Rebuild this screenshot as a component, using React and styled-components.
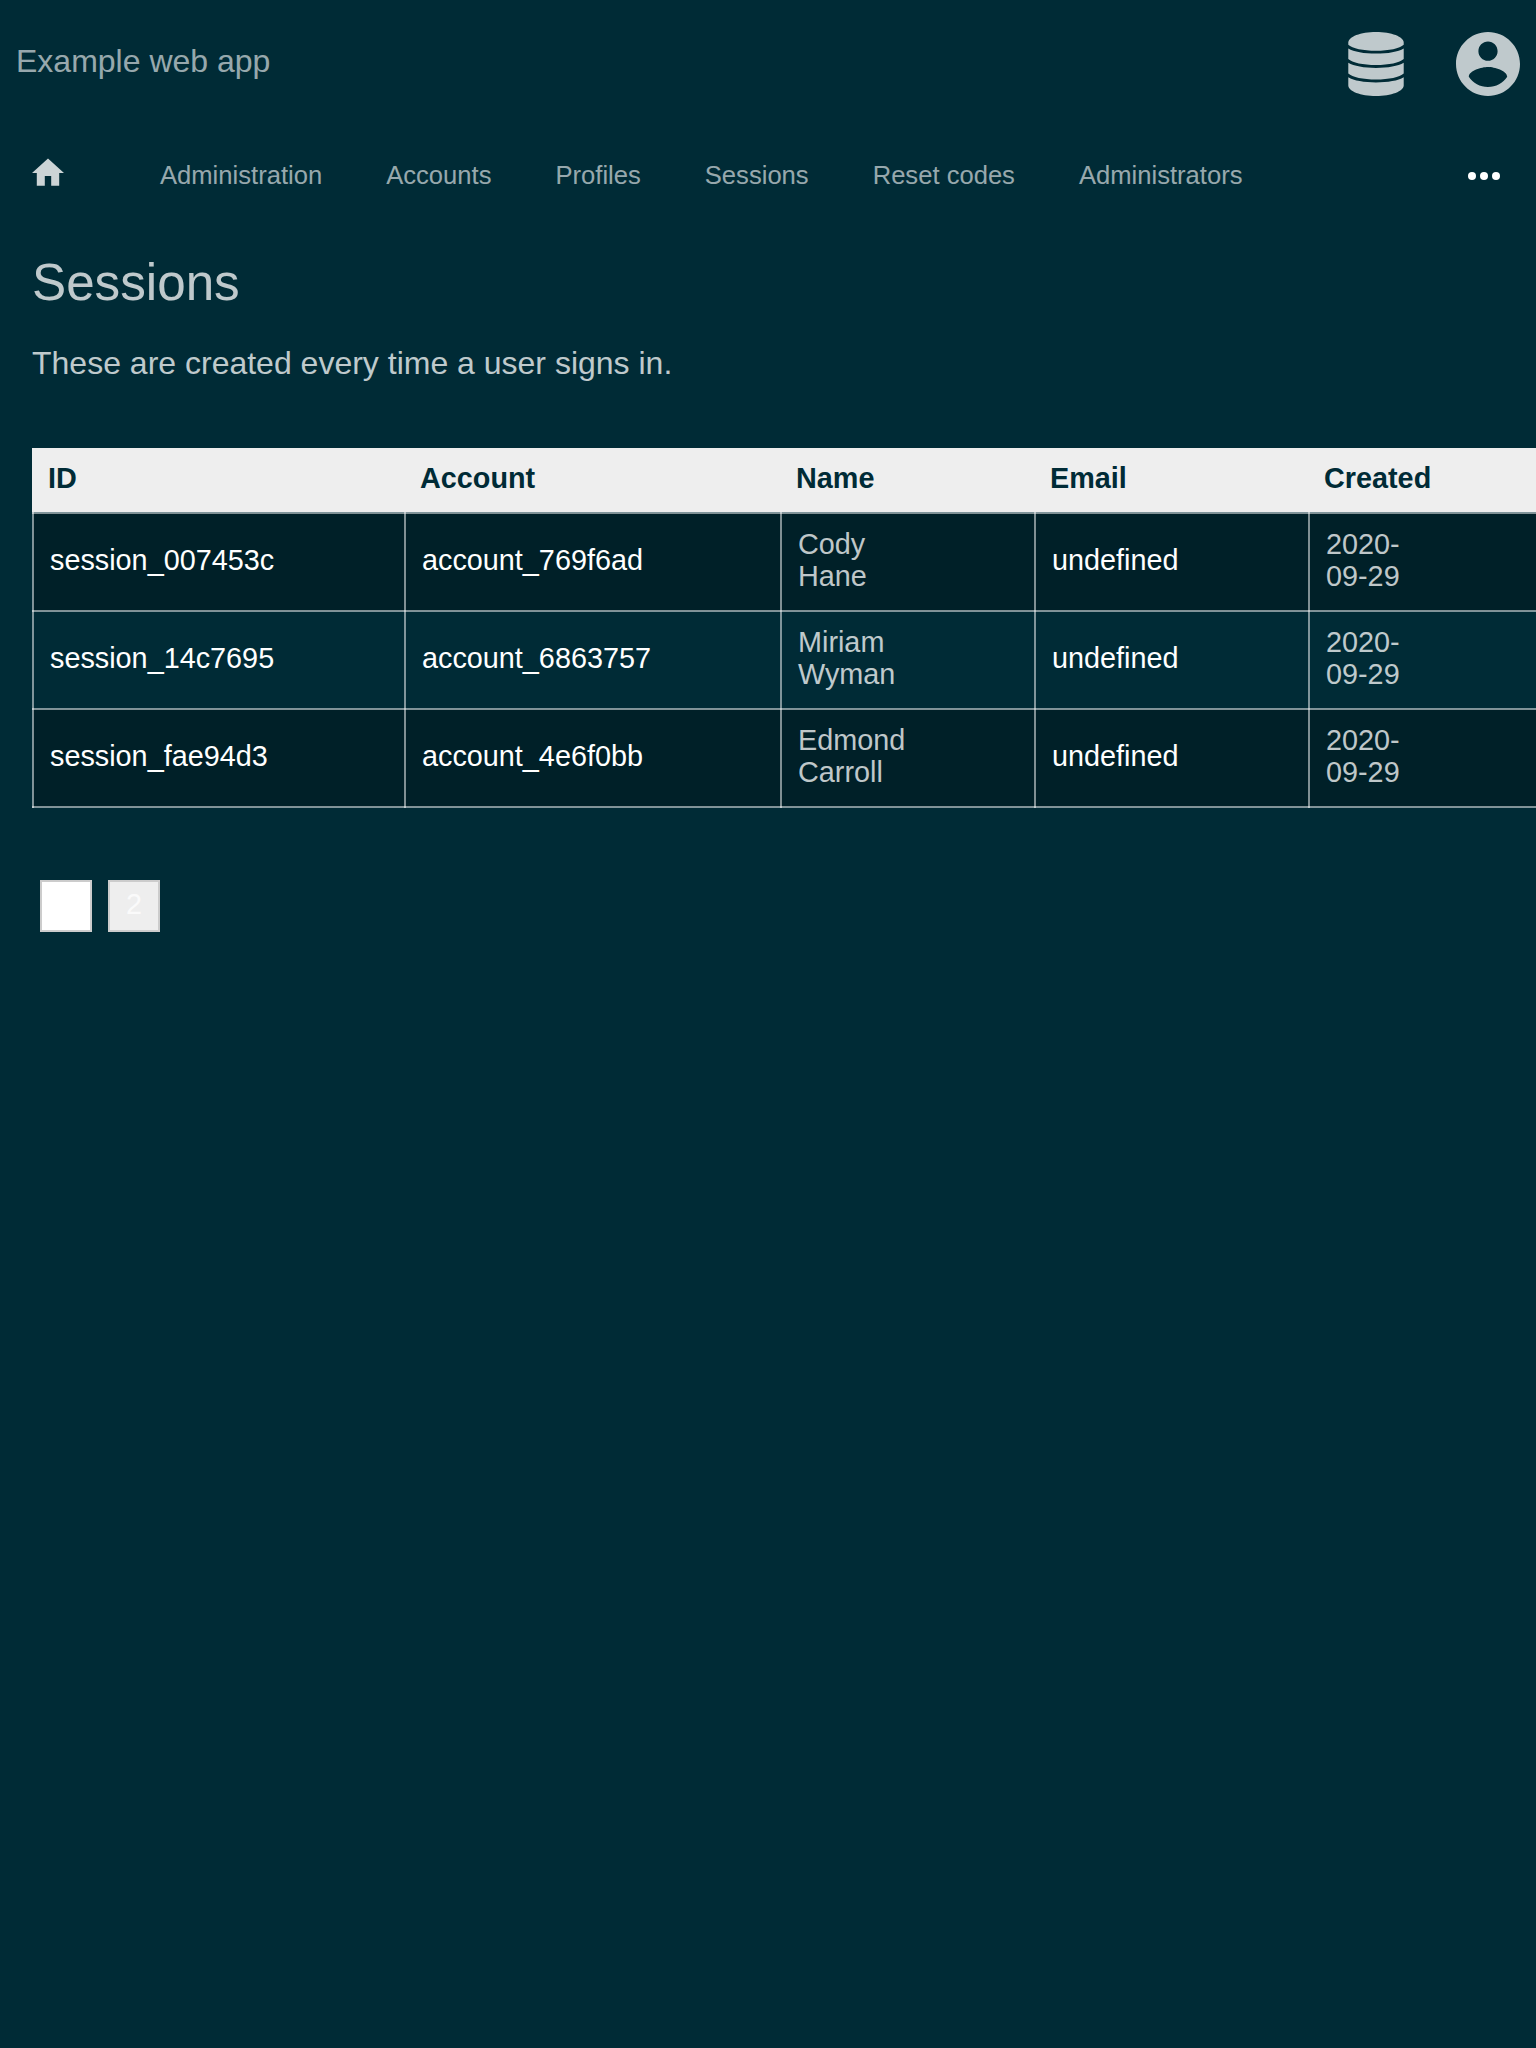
import React from "react";
import styled, { createGlobalStyle } from "styled-components";

const GlobalStyle = createGlobalStyle`
  *, *::before, *::after { box-sizing: border-box; }
  html, body { margin: 0; padding: 0; background: #002b36; overflow: hidden; }
`;

const Page = styled.div`
  width: 1536px;
  height: 2048px;
  overflow: hidden;
  background: #002b36;
  color: rgba(255, 255, 255, 0.75);
  font-family: "Liberation Sans", Arial, sans-serif;
  font-size: 32px;
  line-height: 36px;
`;

const Header = styled.header`
  display: flex;
  align-items: flex-start;
  justify-content: space-between;
  height: 128px;
  padding: 32px 16px 0;
`;

const AppName = styled.div`
  padding-top: 11px;
  color: rgba(255, 255, 255, 0.6);
`;

const HeaderIcons = styled.div`
  display: flex;
  gap: 52px;
`;

const Icon = styled.svg`
  display: block;
  width: ${(p) => p.$w}px;
  height: ${(p) => p.$h}px;
  fill: rgba(255, 255, 255, ${(p) => p.$alpha ?? 0.75});
`;

const Nav = styled.nav`
  display: flex;
  align-items: flex-start;
  height: 96px;
  padding: 30px 36px 0 32px;
`;

const NavLinks = styled.div`
  display: flex;
  flex: 1;
  gap: 64px;
  padding: 3px 0 0 96px;
`;

const NavLink = styled.a`
  color: rgba(255, 255, 255, 0.6);
  font-size: 25.6px;
  line-height: 28px;
  white-space: nowrap;
`;

const More = styled.div`
  display: flex;
  gap: 4px;
  padding-top: 14px;
`;

const Dot = styled.span`
  width: 8px;
  height: 8px;
  border-radius: 50%;
  background: #fff;
`;

const Content = styled.main`
  padding: 30px 0 0 32px;
`;

const Title = styled.h1`
  margin: 0;
  font-size: 51.2px;
  font-weight: 400;
  line-height: 57px;
`;

const Intro = styled.p`
  margin: 34px 0 67px;
`;

const Table = styled.table`
  width: 1578px;
  table-layout: fixed;
  border-collapse: collapse;
  font-size: 28.8px;
  line-height: 32px;
  text-align: left;
`;

const Col = styled.col`
  width: ${(p) => p.$w}px;
`;

const HeadCell = styled.th`
  height: 65px;
  padding: 0;
  vertical-align: top;
`;

const HeadLabel = styled.div`
  height: 64px;
  margin-left: -1px;
  padding: 14px 16px 18px;
  background: #eee;
  color: #002b36;
  font-weight: 700;
`;

const Row = styled.tr`
  background: ${(p) => (p.$shaded ? "rgba(0, 0, 0, 0.25)" : "transparent")};
`;

const Cell = styled.td`
  height: 98px;
  padding: 14px 16px 18px;
  border: 2px solid rgba(255, 255, 255, 0.5);
  color: ${(p) => (p.$link ? "#fff" : "inherit")};
`;

const Wrapped = styled.div`
  width: ${(p) => p.$w}px;
`;

const Pagination = styled.div`
  display: flex;
  gap: 16px;
  padding: 72px 8px 0;
`;

const PageButton = styled.a`
  width: 52px;
  height: 52px;
  padding-top: 6px;
  border: 2px solid #ccc;
  background: ${(p) => (p.$current ? "#fff" : "#eee")};
  color: rgba(255, 255, 255, 0.75);
  font-size: 28.8px;
  line-height: 32px;
  text-align: center;
`;

const links = ["Administration", "Accounts", "Profiles", "Sessions", "Reset codes", "Administrators"];

const columns = [
  { label: "ID", width: 372 },
  { label: "Account", width: 376 },
  { label: "Name", width: 254 },
  { label: "Email", width: 274 },
  { label: "Created", width: 300 },
];

const sessions = [
  { id: "session_007453c", account: "account_769f6ad", name: "Cody Hane", created: "2020-09-29" },
  { id: "session_14c7695", account: "account_6863757", name: "Miriam Wyman", created: "2020-09-29" },
  { id: "session_fae94d3", account: "account_4e6f0bb", name: "Edmond Carroll", created: "2020-09-29" },
];

const DatabaseIcon = () => (
  <Icon $w={56} $h={64} viewBox="-0.3 0 56.6 64" preserveAspectRatio="none">
    <path d="M0 10.5C0 4.7 12.5 0 28 0s28 4.7 28 10.5v2.3c-4 3.7-15 6-28 6s-24-2.3-28-6z" />
    <path d="M0 16.5c5.5 3.4 16 5.1 28 5.1s22.5-1.7 28-5.1v10.6c-4 3.7-15 6-28 6s-24-2.3-28-6z" />
    <path d="M0 30.8c5.5 3.4 16 5.1 28 5.1s22.5-1.7 28-5.1v10.6c-4 3.7-15 6-28 6s-24-2.3-28-6z" />
    <path d="M0 45.2c5.5 3.4 16 5.2 28 5.2s22.5-1.8 28-5.2v8.3C56 59.3 43.5 64 28 64S0 59.3 0 53.5z" />
  </Icon>
);

const AccountIcon = () => (
  <Icon $w={64} $h={64} viewBox="2 2 20 20">
    <path d="M12 2C6.48 2 2 6.48 2 12s4.48 10 10 10 10-4.48 10-10S17.52 2 12 2zm0 3c1.66 0 3 1.34 3 3s-1.34 3-3 3-3-1.34-3-3 1.34-3 3-3zm0 14.2c-2.5 0-4.71-1.28-6-3.22.03-1.99 4-3.08 6-3.08 1.99 0 5.97 1.09 6 3.08-1.29 1.94-3.5 3.22-6 3.22z" />
  </Icon>
);

const HomeIcon = () => (
  <Icon $w={32} $h={28} $alpha={0.8} viewBox="2 2.7 20 17.5">
    <path d="M10 20v-6h4v6h5v-8h3L12 3 2 12h3v8z" />
  </Icon>
);

export default function App() {
  return (
    <>
      <GlobalStyle />
      <Page>
        <Header>
          <AppName>Example web app</AppName>
          <HeaderIcons>
            <DatabaseIcon />
            <AccountIcon />
          </HeaderIcons>
        </Header>
        <Nav>
          <HomeIcon />
          <NavLinks>
            {links.map((label) => (
              <NavLink key={label}>{label}</NavLink>
            ))}
          </NavLinks>
          <More>
            <Dot />
            <Dot />
            <Dot />
          </More>
        </Nav>
        <Content>
          <Title>Sessions</Title>
          <Intro>These are created every time a user signs in.</Intro>
          <Table>
            <colgroup>
              {columns.map((c) => (
                <Col key={c.label} $w={c.width} />
              ))}
            </colgroup>
            <thead>
              <tr>
                {columns.map((c) => (
                  <HeadCell key={c.label}>
                    <HeadLabel>{c.label}</HeadLabel>
                  </HeadCell>
                ))}
              </tr>
            </thead>
            <tbody>
              {sessions.map((s, i) => (
                <Row key={s.id} $shaded={i % 2 === 0}>
                  <Cell $link>{s.id}</Cell>
                  <Cell $link>{s.account}</Cell>
                  <Cell>
                    <Wrapped $w={120}>{s.name}</Wrapped>
                  </Cell>
                  <Cell $link>undefined</Cell>
                  <Cell>
                    <Wrapped $w={100}>{s.created}</Wrapped>
                  </Cell>
                </Row>
              ))}
            </tbody>
          </Table>
          <Pagination>
            <PageButton $current />
            <PageButton>2</PageButton>
          </Pagination>
        </Content>
      </Page>
    </>
  );
}
